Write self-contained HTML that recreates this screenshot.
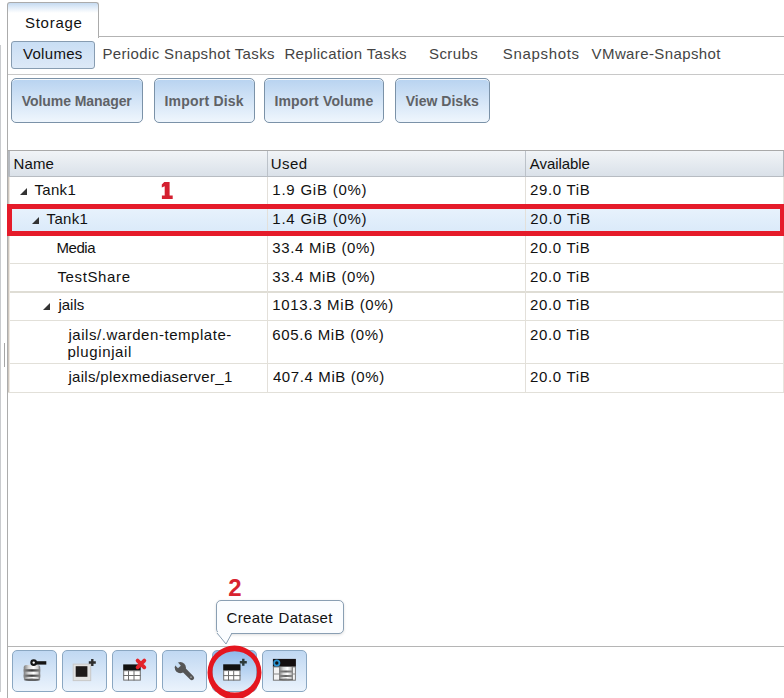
<!DOCTYPE html>
<html><head><meta charset="utf-8">
<style>
*{box-sizing:border-box;margin:0;padding:0}
html,body{width:784px;height:698px;overflow:hidden;background:#fff;font-family:"Liberation Sans",sans-serif;color:#000}
.abs{position:absolute}
.tx{position:absolute;white-space:nowrap;line-height:17px}
#leftedge{left:0;top:45px;width:1px;height:647px;background:#c9cbce}
#handle{left:4px;top:343px;width:1px;height:24px;background:#a5a5a5}
#frame{left:7px;top:37px;width:1px;height:661px;background:#acacac}
#tab{left:7px;top:2px;width:92px;height:36px;border:1px solid #ababab;border-bottom:none;border-radius:3px 3px 0 0;background:linear-gradient(#c6dbf1 0,#e4eef9 5px,#fff 10px,#fff 100%)}
#tabline{left:98px;top:36px;width:686px;height:1px;background:#b3b3b3}
#subbtn{left:11px;top:41px;width:84px;height:28px;border:1px solid #879cb1;border-radius:3px;background:linear-gradient(#c9def4,#dde9f7)}
#subline{left:8px;top:74px;width:776px;height:1px;background:#c8c8c8}
.btn{position:absolute;top:78px;height:45px;border:1px solid #7b92a8;border-radius:5px;background:linear-gradient(#b8d3f0,#eff6fd);box-shadow:inset 0 1px 0 rgba(255,255,255,.85)}
#hdr{left:8px;top:150px;width:776px;height:27px;border-top:1px solid #a9a9a9;border-bottom:1px solid #b7bcc2;background:linear-gradient(#f1f4f7,#dae1e9)}
#hdrl{left:8px;top:151px;width:2px;height:25px;background:#b5b9bf}
#hdrr{left:783px;top:151px;width:1px;height:25px;background:#b0b5bb}
.hsep{position:absolute;top:151px;width:1px;height:25px;background:#bcc2c9}
.row{position:absolute;left:8px;width:776px;height:1px;background:#e2e0d9}
.csep{position:absolute;width:1px;background:#e3e0da}
#sel{left:8px;top:205px;width:776px;height:30px;background:linear-gradient(#e9f3fd,#d9e9f9)}
#redbox{left:7px;top:204px;width:777px;height:32px;border:5px solid #e51b2a;border-right-width:4px}
#botline{left:8px;top:646px;width:776px;height:1px;background:#b5b5b5}
.tb{position:absolute;top:650px;width:45px;height:42px;border:1px solid #8aa7c2;border-radius:5px;background:linear-gradient(#c0d8f2,#ebf3fc)}
#tip{left:216px;top:600px;width:128px;height:34px;border:1px solid #8a9fb3;border-radius:5px;background:#fbfdff;box-shadow:0 1px 3px rgba(0,0,0,.13)}
.tri{position:absolute}
</style></head><body>
<div class="abs" id="leftedge"></div>
<div class="abs" id="handle"></div>
<div class="abs" id="frame"></div>
<div class="abs" id="tab"></div>
<div class="abs" id="tabline"></div>
<div class="abs" id="subbtn"></div>
<div class="abs" id="subline"></div>

<div class="btn" style="left:11px;width:132px"></div>
<div class="btn" style="left:154px;width:101px"></div>
<div class="btn" style="left:264px;width:120px"></div>
<div class="btn" style="left:395px;width:95px"></div>

<div class="abs" id="hdr"></div>
<div class="abs" id="hdrl"></div>
<div class="abs" id="hdrr"></div>
<div class="hsep" style="left:267px"></div>
<div class="hsep" style="left:525px"></div>

<div class="abs" id="sel"></div>
<div class="row" style="top:205px"></div>
<div class="row" style="top:234px"></div>
<div class="row" style="top:263px"></div>
<div class="row" style="top:291px;height:2px;background:#dfddd5"></div>
<div class="row" style="top:320px"></div>
<div class="row" style="top:363px"></div>
<div class="row" style="top:392px"></div>
<div class="csep" style="left:267px;top:177px;height:215px"></div>
<div class="csep" style="left:525px;top:177px;height:215px"></div>
<div class="csep" style="left:8px;top:177px;height:215px;background:#cdc6be"></div><div class="csep" style="left:9px;top:177px;height:215px;background:#eee9e3"></div>
<div class="csep" style="left:783px;top:177px;height:215px;background:#e8e4de"></div>

<svg class="abs" style="left:0;top:0" width="784" height="698">
<polygon points="27,188 27,195 20,195" fill="#333"/>
<polygon points="39,217 39,224 32,224" fill="#333"/>
<polygon points="50,303 50,310 43,310" fill="#333"/>
</svg>

<div class="abs" id="tip"></div>
<svg class="abs" style="left:210px;top:630px" width="30" height="20">
<polygon points="7,2 22,2 16,14" fill="#fbfdff"/>
<polyline points="7,3 16,14 22,3" fill="none" stroke="#8a9fb3" stroke-width="1"/>
</svg>
<div class="tx" id="storage" style="left:24.90px;top:14.00px;font-size:15px;color:#111;letter-spacing:0.750px">Storage</div>
<div class="tx" id="volumes" style="left:23.00px;top:45.00px;font-size:15px;color:#111;letter-spacing:0.300px">Volumes</div>
<div class="tx" id="pst" style="left:102.40px;top:45.00px;font-size:15px;color:#444;letter-spacing:0.372px">Periodic Snapshot Tasks</div>
<div class="tx" id="rep" style="left:284.40px;top:45.00px;font-size:15px;color:#444;letter-spacing:0.354px">Replication Tasks</div>
<div class="tx" id="scr" style="left:429.00px;top:45.00px;font-size:15px;color:#444;letter-spacing:0.432px">Scrubs</div>
<div class="tx" id="snap" style="left:502.80px;top:45.00px;font-size:15px;color:#444;letter-spacing:0.664px">Snapshots</div>
<div class="tx" id="vmw" style="left:591.60px;top:45.00px;font-size:15px;color:#444;letter-spacing:0.392px">VMware-Snapshot</div>
<div class="tx" id="vm" style="left:21.80px;top:93.00px;font-size:14px;color:#5f6266;font-weight:bold;letter-spacing:-0.076px">Volume Manager</div>
<div class="tx" id="id" style="left:164.40px;top:93.00px;font-size:14px;color:#5f6266;font-weight:bold;letter-spacing:0.225px">Import Disk</div>
<div class="tx" id="iv" style="left:274.40px;top:93.00px;font-size:14px;color:#5f6266;font-weight:bold;letter-spacing:0.158px">Import Volume</div>
<div class="tx" id="vd" style="left:405.70px;top:93.00px;font-size:14px;color:#5f6266;font-weight:bold;letter-spacing:0.020px">View Disks</div>
<div class="tx" id="h_name" style="left:13.50px;top:155.00px;font-size:15px;color:#111;letter-spacing:0.120px">Name</div>
<div class="tx" id="h_used" style="left:270.80px;top:155.00px;font-size:15px;color:#111;letter-spacing:0.390px">Used</div>
<div class="tx" id="h_avail" style="left:529.80px;top:155.00px;font-size:15px;color:#111;letter-spacing:-0.067px">Available</div>
<div class="tx" id="r0n" style="left:34.40px;top:181.00px;font-size:15px;color:#111;letter-spacing:0.337px">Tank1</div>
<div class="tx" id="r0u" style="left:272.30px;top:181.00px;font-size:15px;color:#111;letter-spacing:0.769px">1.9 GiB (0%)</div>
<div class="tx" id="r0a" style="left:529.90px;top:181.00px;font-size:15px;color:#111;letter-spacing:0.694px">29.0 TiB</div>
<div class="tx" id="r1n" style="left:46.60px;top:210.00px;font-size:15px;color:#111;letter-spacing:0.315px">Tank1</div>
<div class="tx" id="r1u" style="left:272.30px;top:210.00px;font-size:15px;color:#111;letter-spacing:0.769px">1.4 GiB (0%)</div>
<div class="tx" id="r1a" style="left:530.30px;top:210.00px;font-size:15px;color:#111;letter-spacing:0.720px">20.0 TiB</div>
<div class="tx" id="r2n" style="left:56.40px;top:239.00px;font-size:15px;color:#111;letter-spacing:-0.405px">Media</div>
<div class="tx" id="r2u" style="left:272.30px;top:239.00px;font-size:15px;color:#111;letter-spacing:0.645px">33.4 MiB (0%)</div>
<div class="tx" id="r2a" style="left:529.90px;top:239.00px;font-size:15px;color:#111;letter-spacing:0.694px">20.0 TiB</div>
<div class="tx" id="r3n" style="left:57.40px;top:268.00px;font-size:15px;color:#111;letter-spacing:0.641px">TestShare</div>
<div class="tx" id="r3u" style="left:272.30px;top:268.00px;font-size:15px;color:#111;letter-spacing:0.645px">33.4 MiB (0%)</div>
<div class="tx" id="r3a" style="left:529.90px;top:268.00px;font-size:15px;color:#111;letter-spacing:0.694px">20.0 TiB</div>
<div class="tx" id="r4n" style="left:58.40px;top:296.00px;font-size:15px;color:#111;letter-spacing:0.022px">jails</div>
<div class="tx" id="r4u" style="left:272.30px;top:296.00px;font-size:15px;color:#111;letter-spacing:0.662px">1013.3 MiB (0%)</div>
<div class="tx" id="r4a" style="left:529.90px;top:296.00px;font-size:15px;color:#111;letter-spacing:0.694px">20.0 TiB</div>
<div class="tx" id="r5n" style="left:68.40px;top:326.00px;font-size:15px;color:#111;letter-spacing:0.548px">jails/.warden-template-</div>
<div class="tx" id="r5u" style="left:272.30px;top:326.00px;font-size:15px;color:#111;letter-spacing:0.616px">605.6 MiB (0%)</div>
<div class="tx" id="r5a" style="left:529.90px;top:326.00px;font-size:15px;color:#111;letter-spacing:0.694px">20.0 TiB</div>
<div class="tx" id="r6n" style="left:68.40px;top:368.00px;font-size:15px;color:#111;letter-spacing:0.323px">jails/plexmediaserver_1</div>
<div class="tx" id="r6u" style="left:272.90px;top:368.00px;font-size:15px;color:#111;letter-spacing:0.616px">407.4 MiB (0%)</div>
<div class="tx" id="r6a" style="left:529.90px;top:368.00px;font-size:15px;color:#111;letter-spacing:0.694px">20.0 TiB</div>
<div class="tx" id="r5n2" style="left:67.40px;top:343.00px;font-size:15px;color:#111;letter-spacing:0.620px">pluginjail</div>
<div class="tx" id="tiptext" style="left:226.40px;top:609.00px;font-size:15px;color:#111;letter-spacing:0.402px">Create Dataset</div>
<div class="tx" id="num2" style="left:228.30px;top:579.00px;font-size:24px;color:#d8232f;font-weight:bold">2</div>

<div class="abs" id="redbox"></div>
<svg class="abs" style="left:150px;top:175px" width="40" height="30">
<path d="M14.3 7 L19.6 7 L19.6 20.6 L22.7 20.6 L22.7 24 L11.9 24 L11.9 20.6 L14.7 20.6 L14.7 11.2 L11.8 12.6 L11.8 9.6 Z" fill="#d42030"/>
</svg>

<div class="abs" id="botline"></div>
<div class="tb" style="left:12px"></div>
<div class="tb" style="left:62px"></div>
<div class="tb" style="left:112px"></div>
<div class="tb" style="left:162px"></div>
<div class="tb" style="left:212px;background:linear-gradient(#8fbaea,#e3eefa)"></div>
<div class="tb" style="left:262px"></div>
<svg class="abs" style="left:0;top:640px" width="784" height="58">
<defs>
<linearGradient id="silver" x1="0" x2="1" y1="0" y2="0">
<stop offset="0" stop-color="#7c7c7c"/><stop offset="0.3" stop-color="#d8d8d8"/><stop offset="0.6" stop-color="#ffffff"/><stop offset="0.85" stop-color="#cfcfcf"/><stop offset="1" stop-color="#707070"/>
</linearGradient>
<linearGradient id="band" x1="0" x2="1" y1="0" y2="0"><stop offset="0" stop-color="#8a8a8a"/><stop offset="0.5" stop-color="#3e3e3e"/><stop offset="1" stop-color="#8a8a8a"/></linearGradient>
</defs>
<!-- icon1 db+key -->
<rect x="23.7" y="25" width="16.5" height="15" rx="2.5" fill="url(#silver)"/>
<rect x="23.7" y="29.2" width="16.5" height="2.4" fill="url(#band)"/>
<rect x="23.7" y="34.6" width="16.5" height="2.2" fill="url(#band)"/>
<ellipse cx="32" cy="39.8" rx="8.3" ry="1.3" fill="#4a4a4a" opacity="0.85"/>
<rect x="35.5" y="21.2" width="10.8" height="3.4" fill="#141414"/>
<circle cx="33.7" cy="22.6" r="2.3" fill="#fff" stroke="#141414" stroke-width="2.2"/>
<!-- icon2 -->
<rect x="73.2" y="24.1" width="17.5" height="16.5" fill="#e2e2e2" stroke="#c9c9c9" stroke-width="1"/>
<rect x="75.7" y="26.2" width="11.7" height="10.6" fill="#1e1a1a"/>
<path d="M91.1 19 h2.4 v2.3 h2.3 v2.4 h-2.3 v2.3 h-2.4 v-2.3 h-2.3 v-2.4 h2.3 z" fill="#2e2e2e"/>
<!-- icon3 -->
<rect x="123.2" y="24.4" width="17.5" height="6.3" fill="#111"/>
<rect x="123.7" y="30.7" width="16.6" height="9.4" fill="#fff" stroke="#6d6d6d" stroke-width="1"/>
<line x1="123.2" y1="35.5" x2="140.7" y2="35.5" stroke="#6d6d6d" stroke-width="1"/>
<line x1="128.5" y1="30.7" x2="128.5" y2="40.5" stroke="#6d6d6d" stroke-width="1"/>
<line x1="134" y1="30.7" x2="134" y2="40.5" stroke="#6d6d6d" stroke-width="1"/>
<path d="M137.6 20.6 L144.3 27.3 M144.3 20.6 L137.6 27.3" stroke="#e3242b" stroke-width="3.8" stroke-linecap="round"/>
<!-- icon4 wrench -->
<path d="M183.5 29.5 L191.8 37.8" stroke="#555" stroke-width="4.6" stroke-linecap="round"/>
<circle cx="180.3" cy="27.6" r="5.6" fill="#555"/>
<path d="M177.2 21.5 L180.8 25.8 L178 28.3 L174.2 24.5 Z" fill="#c6ddf4"/>
<circle cx="191" cy="37.2" r="0.9" fill="#999"/>
<!-- icon5 -->
<rect x="223.2" y="24.3" width="17.3" height="6.3" fill="#111"/>
<rect x="223.7" y="30.6" width="16.3" height="9.5" fill="#fff" stroke="#6d6d6d" stroke-width="1"/>
<line x1="223.2" y1="35.6" x2="240.5" y2="35.6" stroke="#6d6d6d" stroke-width="1"/>
<line x1="228.5" y1="30.6" x2="228.5" y2="40.5" stroke="#6d6d6d" stroke-width="1"/>
<line x1="233.7" y1="30.6" x2="233.7" y2="40.5" stroke="#6d6d6d" stroke-width="1"/>
<path d="M242.1 18.8 h2.4 v2.3 h2.3 v2.4 h-2.3 v2.3 h-2.4 v-2.3 h-2.3 v-2.4 h2.3 z" fill="#2d3a3a"/>
<!-- icon6 -->
<rect x="272.9" y="18.9" width="23" height="8" fill="#140f10"/>
<rect x="273.4" y="26.9" width="22" height="13.3" fill="#f4f4f4" stroke="#777" stroke-width="1"/>
<line x1="273" y1="34" x2="295.9" y2="34" stroke="#888" stroke-width="1"/>
<rect x="279" y="27" width="14" height="13.2" fill="url(#silver)"/>
<rect x="279" y="30.5" width="14" height="2" fill="url(#band)" opacity="0.8"/>
<rect x="279" y="35" width="14" height="2" fill="url(#band)" opacity="0.8"/>
<ellipse cx="286" cy="39.6" rx="7" ry="1" fill="#444" opacity="0.7"/>
<circle cx="276.8" cy="23" r="2.6" fill="#141414" stroke="#2a93d2" stroke-width="1.8"/>
</svg>


<svg class="abs" style="left:0;top:600px" width="784" height="98">
<path fill-rule="evenodd" fill="#e4161f" d="M207.5 72.4 A27 26.8 0 1 0 261.5 72.4 A27 26.8 0 1 0 207.5 72.4 Z M212.39999999999998 71.9 A22.3 20.6 0 1 0 257.0 71.9 A22.3 20.6 0 1 0 212.39999999999998 71.9 Z"/>
</svg>
</body></html>
